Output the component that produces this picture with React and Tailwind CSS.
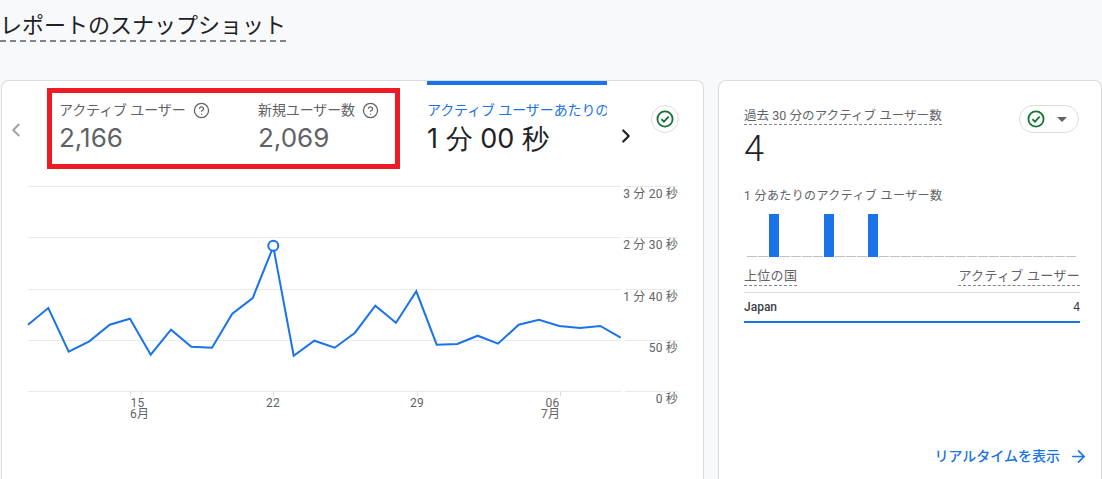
import React from 'react';
import { ChevronLeft, ChevronRight, ArrowRight, CircleHelp } from 'lucide-react';

const points = [
  [28, 324.7], [48.3, 308], [68.7, 351.7], [89.3, 341.3], [109.7, 324.7], [130, 318.7], [150.7, 354.7],
  [171, 329.7], [191.3, 346.7], [212, 347.7], [232.3, 313.7], [252.7, 298], [273.3, 246.7], [293.7, 355.7],
  [314.3, 340.7], [334.7, 347.7], [355, 332.7], [375.3, 305.7], [396, 322.7], [416.3, 291.3], [436.7, 344.7],
  [457.3, 344], [477.7, 335.7], [498, 343.7], [518.7, 324.7], [539, 319.7], [559.3, 326], [580, 328],
  [600.3, 326], [620.7, 337.7],
];

const gridLines = [186.5, 237.5, 289.5, 340.5, 391.5];

const yLabels = [
  ['3 分 20 秒', 198],
  ['2 分 30 秒', 249],
  ['1 分 40 秒', 301],
  ['50 秒', 352],
  ['0 秒', 403],
];

const xLabels = [
  ['15', 137.5],
  ['22', 273],
  ['29', 417],
  ['06', 552.5],
];

const barSlots = Array.from({ length: 30 });
const activeBars = [2, 7, 11];

const CheckBadge = ({ size = 18 }) => (
  <svg width={size} height={size} viewBox="0 0 18 18" fill="none">
    <circle cx="9" cy="9" r="7.6" stroke="#137333" strokeWidth="1.8" />
    <path d="M5.4 9.2l2.5 2.5 4.8-5" stroke="#137333" strokeWidth="1.8" />
  </svg>
);

const Metric = ({ label, value, className }) => (
  <div className={className}>
    <div className="flex items-center gap-[7px] text-[14px] leading-[18px] tracking-[-0.1px] text-[#5f6368]">
      <span>{label}</span>
      <CircleHelp size={17} strokeWidth={1.8} />
    </div>
    <div className="mt-[3px] text-[26px] leading-[32px] text-[#5f6368] font-['Inter']">{value}</div>
  </div>
);

const TrendChart = () => (
  <svg width="700" height="250" viewBox="0 0 700 250" className="block">
    <g transform="translate(-2 -178)">
      {gridLines.map((y) => (
        <g key={y}>
          <line x1="28" x2="621" y1={y} y2={y} stroke="#e8eaed" />
          <line x1="625" x2="678" y1={y} y2={y} stroke="#e8eaed" />
        </g>
      ))}
      {[130, 273, 417, 560].map((x) => (
        <line key={x} x1={x + 0.5} x2={x + 0.5} y1="391" y2="396" stroke="#dadce0" />
      ))}
      <polyline
        points={points.map((p) => p.join(',')).join(' ')}
        fill="none"
        stroke="#1a73e8"
        strokeWidth="2"
      />
      <circle cx="273.3" cy="245.7" r="5" fill="#fff" stroke="#1a73e8" strokeWidth="2" />
      <g fill="#5f6368" fontSize="12" letterSpacing="0.2">
        {yLabels.map(([text, y]) => (
          <text key={text} x="678" y={y} textAnchor="end">{text}</text>
        ))}
        {xLabels.map(([text, x]) => (
          <text key={text} x={x} y="407" textAnchor="middle">{text}</text>
        ))}
        <text x="130" y="418">6月</text>
        <text x="541" y="418">7月</text>
      </g>
    </g>
  </svg>
);

export default function App() {
  return (
    <div
      className="w-[1102px] h-[479px] overflow-hidden bg-[#f8f9fa] text-[#202124]"
      style={{ fontFamily: 'Roboto, "Noto Sans CJK JP", sans-serif' }}
    >
      <div className="h-[80px]">
        <h1 className="w-fit pt-[11px] text-[22px] leading-[29px] font-normal border-b-2 border-dashed border-[#80868b]">
          レポートのスナップショット
        </h1>
      </div>

      <div className="flex gap-[14px] pl-[1px]">
        {/* main card */}
        <div className="w-[703px] h-[399px] bg-white border border-b-0 border-[#dadce0] rounded-t-lg">
          <div className="flex h-[97px]">
            <div className="w-[45px] pt-[38px] pl-[3px] text-[#9aa0a6]">
              <ChevronLeft size={22} strokeWidth={2} />
            </div>
            <div className="flex w-[353px] h-[81px] mt-[7px] border-[5px] border-[#ed1c24]">
              <Metric label="アクティブ ユーザー" value="2,166" className="w-[206px] pt-[8px] pl-[7px]" />
              <Metric label="新規ユーザー数" value="2,069" className="pt-[8px]" />
            </div>
            <div className="ml-[27px] w-[180px] overflow-hidden">
              <div className="h-[4px] bg-[#1a73e8]" />
              <div className="mt-[16px] whitespace-nowrap text-[14px] leading-[18px] tracking-[-0.1px] text-[#1a73e8]">
                アクティブ ユーザーあたりの平均エンゲージメント時間
              </div>
              <div className="mt-[4px] whitespace-nowrap text-[27px] leading-[32px] font-['Inter']">1 分 00 秒</div>
            </div>
            <div className="pt-[44px] pl-[8px]">
              <ChevronRight size={22} strokeWidth={2.4} />
            </div>
            <div className="ml-[14px] mt-[24px] flex items-center justify-center w-[28px] h-[28px] rounded-full border border-[#dadce0]">
              <CheckBadge size={18} />
            </div>
          </div>
          <TrendChart />
        </div>

        {/* realtime card */}
        <div className="flex flex-col w-[384px] h-[399px] bg-white border border-b-0 border-[#dadce0] rounded-t-lg pl-[25px] pr-[21px]">
          <div className="flex justify-between pt-[24px]">
            <div className="pt-[3px]">
              <div className="w-fit text-[12.5px] leading-[16px] tracking-[0.05px] text-[#5f6368] border-b border-dashed border-[#80868b]">
                過去 30 分のアクティブ ユーザー数
              </div>
              <div className="mt-[4px] text-[36px] leading-[40px] font-light">4</div>
            </div>
            <div className="flex items-center gap-[12px] h-[28px] pl-[7px] pr-[11px] mr-[1px] rounded-full border border-[#dadce0]">
              <CheckBadge size={18} />
              <div className="w-0 h-0 border-x-[5px] border-x-transparent border-t-[5px] border-t-[#5f6368]" />
            </div>
          </div>

          <div className="mt-[18px] text-[12px] leading-[18px] tracking-[0.4px] text-[#5f6368]">
            1 分あたりのアクティブ ユーザー数
          </div>

          <div className="flex items-end gap-[1px] h-[43px] mt-[9px] ml-[3px] w-[331px]">
            {barSlots.map((_, i) => (
              <div
                key={i}
                className={activeBars.includes(i) ? 'w-[10px] h-[43px] bg-[#1a73e8]' : 'w-[10px] h-[1px] bg-[#bdc1c6]'}
              />
            ))}
          </div>

          <div className="flex justify-between mt-[10px] text-[13px] leading-[18px] tracking-[0.3px] text-[#5f6368]">
            <span className="border-b border-dashed border-[#80868b]">上位の国</span>
            <span className="border-b border-dashed border-[#80868b]">アクティブ ユーザー</span>
          </div>

          <div className="flex justify-between items-center h-[29px] mt-[6px] border-t border-[#dadce0] text-[12px] font-medium text-[#3c4043]">
            <span>Japan</span>
            <span className="font-normal">4</span>
          </div>
          <div className="h-[2px] bg-[#1a73e8]" />

          <div className="flex justify-end items-center gap-[9px] mt-auto mb-[13px] -mr-[8px] text-[14px] leading-[20px] font-medium text-[#1a73e8]">
            <span>リアルタイムを表示</span>
            <ArrowRight size={19} strokeWidth={2.2} />
          </div>
        </div>
      </div>
    </div>
  );
}
